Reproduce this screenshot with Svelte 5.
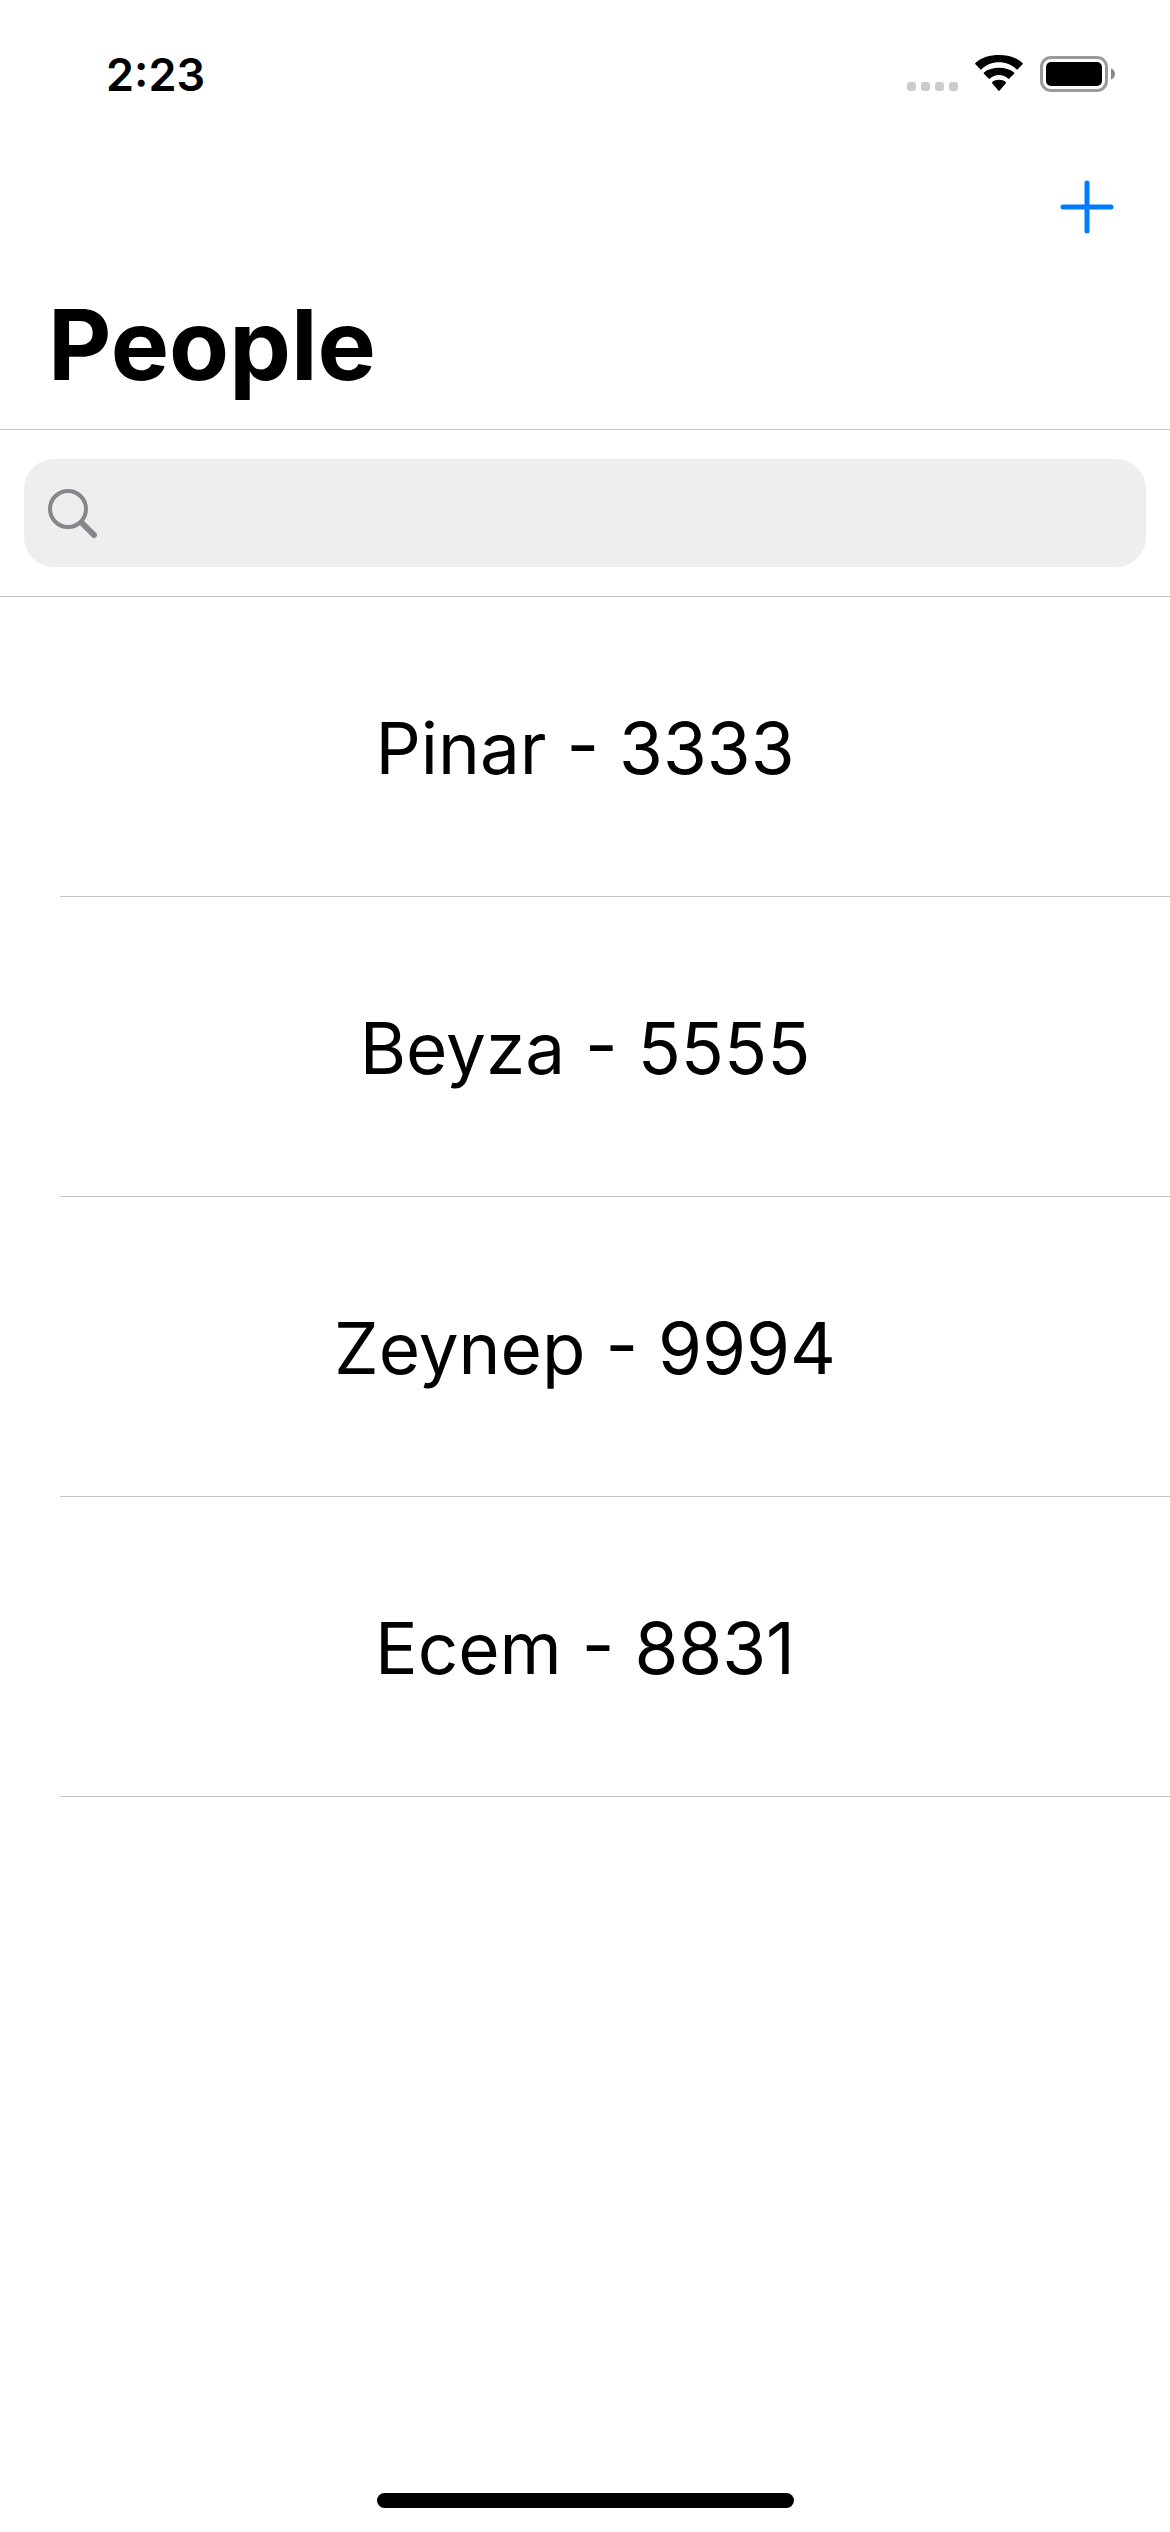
<script>
  const people = [
    { name: 'Pinar', code: '3333' },
    { name: 'Beyza', code: '5555' },
    { name: 'Zeynep', code: '9994' },
    { name: 'Ecem', code: '8831' }
  ];

  let query = $state('');

  const visible = $derived(
    people.filter((p) => `${p.name} ${p.code}`.toLowerCase().includes(query.trim().toLowerCase()))
  );
</script>

<div class="screen">
  <div class="status">
    <time class="clock">2:23</time>
    <div class="indicators">
      <svg class="signal" viewBox="0 0 52 38" aria-hidden="true">
        <rect x="0" y="27" width="9" height="9" rx="3" />
        <rect x="14" y="27" width="9" height="9" rx="3" />
        <rect x="28" y="27" width="9" height="9" rx="3" />
        <rect x="42" y="27" width="9" height="9" rx="3" />
      </svg>
      <svg class="wifi" viewBox="0 0 48 38" aria-hidden="true">
        <path d="M24 7.3c6.7 0 12.8 2.6 17.4 6.9.4.4.9.4 1.300 0l4.900-4.900c.4-.4.4-1 0-1.400C41.300 2.200 33 0 24 0S6.700 2.200.4 7.900c-.4.4-.4 1 0 1.400l4.900 4.900c.4.4.9.4 1.300 0C11.200 9.900 17.300 7.300 24 7.300z" />
        <path d="M24 20c3.500 0 6.600 1.300 9 3.500.4.4 1 .4 1.400 0l4.700-4.700c.4-.4.4-1 0-1.400C35.100 14.300 29.800 12.800 24 12.800s-11.100 1.500-15.100 4.600c-.4.4-.4 1 0 1.400l4.700 4.700c.4.4 1 .4 1.400 0 2.400-2.200 5.500-3.500 9-3.500z" />
        <path d="M30.800 28.300c.4-.4.4-1 0-1.400-1.900-1.500-4.200-2.200-6.800-2.200s-4.900.7-6.800 2.200c-.4.4-.4 1 0 1.400l6.100 7.300c.4.5 1 .5 1.400 0z" />
      </svg>
      <svg class="battery" viewBox="0 0 76 38" aria-hidden="true">
        <rect class="shell" x="1.500" y="2.500" width="65" height="33" rx="9.500" />
        <rect x="6" y="7" width="56" height="24" rx="5" />
        <path class="tip" d="M71 13.500c2.400.7 4 2.900 4 5.500s-1.600 4.800-4 5.500z" />
      </svg>
    </div>
  </div>

  <header>
    <nav>
      <button type="button" class="add" aria-label="Add person">
        <svg viewBox="0 0 54 54" aria-hidden="true">
          <path d="M27 3v48M3 27h48" />
        </svg>
      </button>
    </nav>
    <h1>People</h1>
  </header>

  <search>
    <label class="field">
      <svg viewBox="0 0 52 52" aria-hidden="true">
        <circle cx="20" cy="22" r="18" />
        <path d="M33.500 35.500L46 48" />
      </svg>
      <input type="search" aria-label="Search people" bind:value={query} />
    </label>
  </search>

  <main>
    <ul>
      {#each visible as person (person.name)}
        <li>{person.name} - {person.code}</li>
      {/each}
    </ul>
  </main>

  <footer><div class="home"></div></footer>
</div>

<style>
  :global(body) {
    background: #fff;
  }

  .screen {
    display: flex;
    flex-direction: column;
    min-height: 100vh;
    color: #000;
    font-family: Inter, 'Liberation Sans', sans-serif;
  }

  .status {
    display: flex;
    justify-content: space-between;
    align-items: center;
    height: 141px;
    padding: 0 54px 0 106px;
    box-sizing: border-box;
  }

  .clock {
    font-size: 45px;
    font-weight: 600;
    line-height: 56px;
    padding-top: 8px;
  }

  .indicators {
    display: flex;
    padding-top: 6px;
  }

  .indicators svg {
    height: 38px;
  }

  .signal {
    width: 52px;
    margin-right: 16px;
    fill: #ccc;
  }

  .wifi {
    width: 48px;
    margin-right: 17px;
  }

  .battery {
    width: 76px;
  }

  .shell {
    fill: none;
    stroke: #999;
    stroke-width: 3;
  }

  .tip {
    fill: #888;
  }

  header {
    border-bottom: 1px solid #c6c6c8;
  }

  nav {
    display: flex;
    justify-content: flex-end;
    align-items: center;
    height: 132px;
    padding: 0 56px;
  }

  .add {
    display: flex;
    padding: 0;
    border: 0;
    background: none;
    cursor: pointer;
  }

  .add svg {
    width: 54px;
    height: 54px;
    fill: none;
    stroke: #007aff;
    stroke-width: 5;
    stroke-linecap: round;
  }

  h1 {
    margin: 0;
    padding: 12px 48px 24px;
    font-size: 98px;
    font-weight: 700;
    line-height: 120px;
  }

  search {
    display: block;
    padding: 29px 24px;
    border-bottom: 1px solid #c6c6c8;
  }

  .field {
    display: flex;
    align-items: center;
    gap: 12px;
    height: 108px;
    padding: 0 24px;
    border-radius: 30px;
    background: #eee;
  }

  .field svg {
    flex: none;
    width: 52px;
    height: 52px;
    fill: none;
    stroke: #86868b;
    stroke-width: 4;
    stroke-linecap: round;
  }

  .field path {
    stroke-width: 6;
  }

  input {
    flex: 1;
    min-width: 0;
    border: 0;
    outline: 0;
    background: none;
    font: inherit;
    font-size: 51px;
  }

  main {
    flex: 1;
  }

  ul {
    margin: 0;
    padding: 0 0 0 60px;
    list-style: none;
  }

  li {
    padding: 107px 60px 104px 0;
    border-bottom: 1px solid #c6c6c8;
    font-size: 71px;
    line-height: 88px;
    text-align: center;
  }

  footer {
    display: flex;
    justify-content: center;
    padding: 24px;
  }

  .home {
    width: 417px;
    height: 15px;
    border-radius: 8px;
    background: #000;
  }
</style>
